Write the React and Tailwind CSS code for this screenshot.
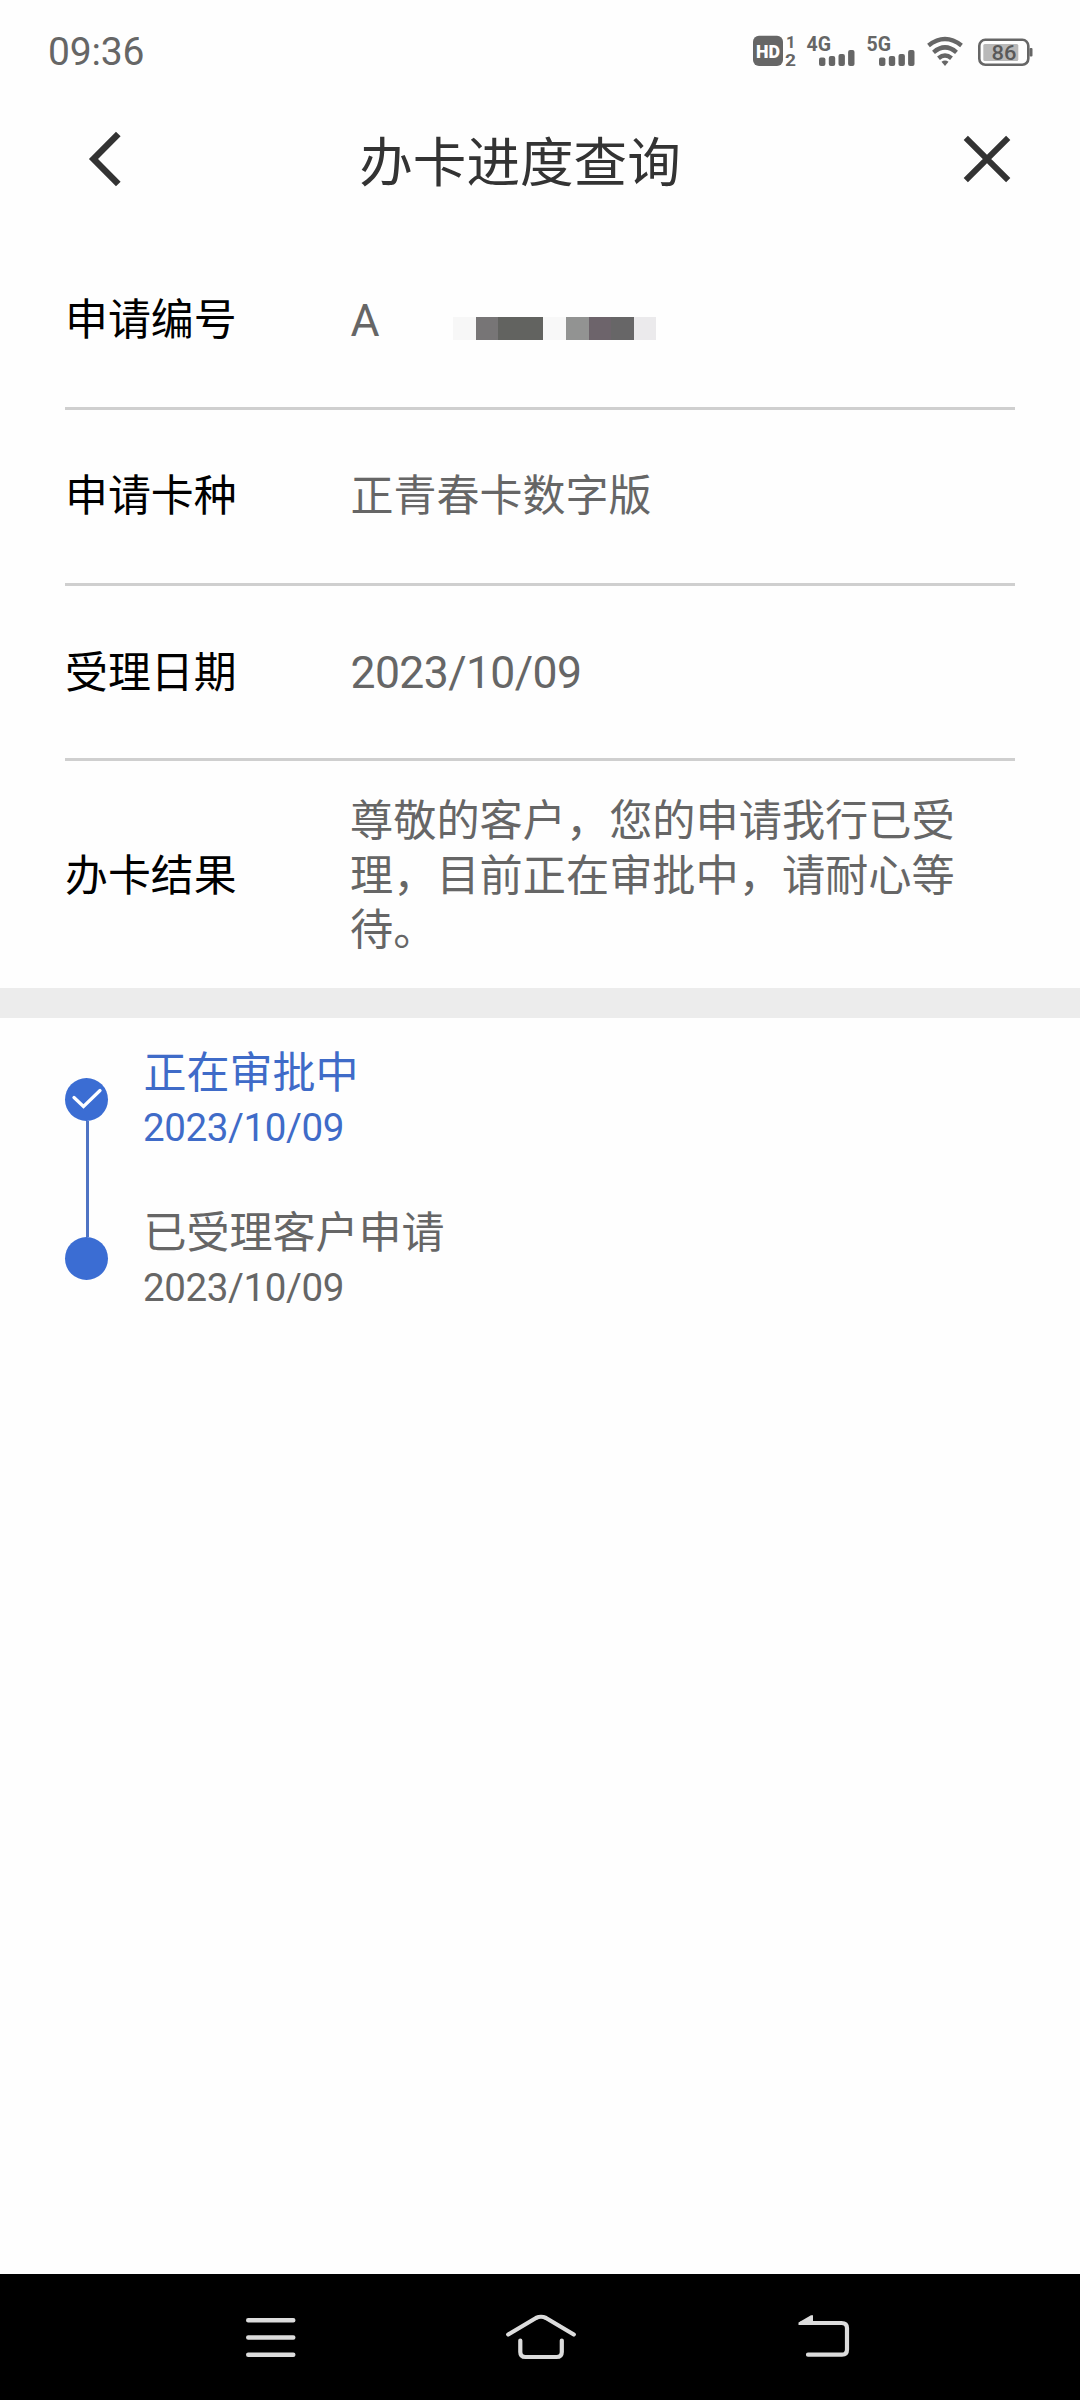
import React from 'react';

const details = [
  { label: '申请编号', value: 'A', type: 'masked' },
  { label: '申请卡种', value: '正青春卡数字版', type: 'text' },
  { label: '受理日期', value: '2023/10/09', type: 'date' },
];

const steps = [
  { title: '正在审批中', date: '2023/10/09', active: true },
  { title: '已受理客户申请', date: '2023/10/09', active: false },
];

const maskColors = [
  '#f7f7f7', '#777576', '#626360', '#626360', '#f8f8f8',
  '#929392', '#6d646b', '#676667', '#ebeaec',
];

function Signal({ label }) {
  return (
    <svg className="overflow-visible" width="42" height="32" viewBox="0 0 42 32" fill="#666666">
      <text x="-0.5" y="15.5" fontSize="20.5" fontWeight="700" fontFamily="Roboto, sans-serif" textLength="24.5" lengthAdjust="spacingAndGlyphs">
        {label}
      </text>
      <rect x="12" y="22.5" width="6.4" height="8.5" rx="2" />
      <rect x="21.8" y="21" width="6.4" height="10" rx="2" />
      <rect x="31.5" y="19" width="6.4" height="12" rx="2" />
      <rect x="41.1" y="15" width="6.4" height="16" rx="2" />
    </svg>
  );
}

function StatusBar() {
  return (
    <div className="flex h-[102px] items-center justify-between pl-[48px] pr-[47px]">
      <span className="pt-[2px] font-[Roboto] text-[39px] leading-none tracking-[-0.2px] text-[#666666]">09:36</span>
      <div className="flex items-center">
        {/* HD voice */}
        <svg className="mr-[11px] overflow-visible" width="43" height="32" viewBox="0 0 43 32" fill="#666666">
          <rect x="0" y="0.7" width="30" height="30.3" rx="6" />
          <text x="3" y="22.5" fontSize="19" fontWeight="900" fill="#ffffff" fontFamily="Roboto, sans-serif" textLength="24" lengthAdjust="spacingAndGlyphs">HD</text>
          <text x="33" y="12.5" fontSize="16.5" fontWeight="700" fontFamily="Roboto, sans-serif">1</text>
          <text x="32" y="30.5" fontSize="17" fontWeight="700" fontFamily="Roboto, sans-serif" textLength="11" lengthAdjust="spacingAndGlyphs">2</text>
        </svg>
        <div className="mr-[18px]"><Signal label="4G" /></div>
        <div className="mr-[18px]"><Signal label="5G" /></div>
        {/* Wifi */}
        <svg className="mr-[15px]" width="36" height="32" viewBox="0 0 36 32" fill="none" stroke="#666666" strokeWidth="4.4">
          <path d="M1.5 10.5 Q18 -2.5 34.5 10.5" />
          <path d="M6.5 17.3 Q18 7.5 29.5 17.3" />
          <path d="M11.5 23.3 Q18 17.8 24.5 23.3" />
          <path d="M14.5 26.8 Q18 24 21.5 26.8 L18 31 Z" fill="#666666" stroke="none" />
        </svg>
        {/* Battery */}
        <svg width="55" height="32" viewBox="0 0 55 32" fill="#666666">
          <rect x="1.3" y="4.8" width="49" height="25" rx="6" fill="none" stroke="#666666" strokeWidth="2.6" />
          <rect x="5.3" y="9" width="35" height="17" rx="1.5" fill="#b9b9b9" />
          <rect x="51.5" y="13" width="3" height="8.5" rx="1" />
          <text x="13.5" y="25" fontSize="21" fontWeight="500" fill="#595959" fontFamily="Roboto, sans-serif" textLength="25" lengthAdjust="spacingAndGlyphs">86</text>
        </svg>
      </div>
    </div>
  );
}

function Header() {
  return (
    <div className="flex h-[133px] items-start justify-between pl-[88px] pr-[69px] pt-[24px]">
      <svg className="mt-[5px]" width="34" height="56" viewBox="0 0 34 56" fill="none" stroke="#333333" strokeWidth="6.5">
        <path d="M30.3 3 L5.5 28 L30.3 53" />
      </svg>
      <h1 className="-mt-[2px] mr-[45px] text-[53.6px] leading-[70px] text-[#333333]">办卡进度查询</h1>
      <svg className="mt-[9px]" width="48" height="48" viewBox="0 0 48 48" fill="none" stroke="#333333" strokeWidth="6">
        <path d="M2.8 2.8 L45.2 45.2 M45.2 2.8 L2.8 45.2" />
      </svg>
    </div>
  );
}

function MaskedNumber() {
  return (
    <div className="mt-[15px] ml-[73.5px] flex">
      {maskColors.map((color, i) => (
        <div key={i} className="h-[23px] w-[22.6px]" style={{ backgroundColor: color }} />
      ))}
    </div>
  );
}

function DetailRow({ label, value, type }) {
  return (
    <div className="flex h-[175.3px] items-center border-b-[3px] border-[#cfcfcf] text-[42.9px]">
      <div className={`w-[285.5px] text-black ${type === 'date' ? 'pb-[6px]' : 'pb-[9px]'}`}>{label}</div>
      {type === 'text' ? (
        <div className="pb-[9px] text-[43px] text-[#666666]">{value}</div>
      ) : (
        <div className="flex items-center font-[Roboto] text-[44.5px] leading-none text-[#666666]">
          <span className={type === 'date' ? 'pt-[4px] tracking-[-0.6px]' : ''}>{value}</span>
          {type === 'masked' && <MaskedNumber />}
        </div>
      )}
    </div>
  );
}

function Timeline() {
  return (
    <div className="flex pl-[65px] pt-[60px]">
      <div className="flex w-[43px] flex-col items-center">
        <div className="flex size-[43px] items-center justify-center rounded-full bg-[#3b6dd3]">
          <svg width="30" height="22" viewBox="0 0 30 22" fill="none" stroke="#ffffff" strokeWidth="3.2" strokeLinecap="round">
            <path d="M2 9.5 L11.5 18.5 L28 2.5" />
          </svg>
        </div>
        <div className="ml-[2px] h-[116px] w-[3px] bg-[#4f74c4]" />
        <div className="size-[43px] rounded-full bg-[#3b6dd3]" />
      </div>
      <div className="-mt-[37px] ml-[35.5px]">
        {steps.map((step) => (
          <div key={step.title} className={`h-[160px] ${step.active ? 'text-[#3f6bc8]' : 'text-[#666666]'}`}>
            <div className="text-[43px] leading-[56px]">{step.title}</div>
            <div className="-ml-[0.5px] pt-[3px] font-[Roboto] text-[38.5px] leading-[56px] tracking-[-0.4px]">{step.date}</div>
          </div>
        ))}
      </div>
    </div>
  );
}

function NavBar() {
  return (
    <div className="flex h-[126px] items-start justify-between bg-black pl-[246px] pr-[229px] pt-[39px]">
      <svg width="50" height="46" viewBox="0 0 50 46" fill="none" stroke="#dcdcdc" strokeWidth="4.4" strokeLinecap="round">
        <path d="M2.2 7.3 H47.3 M2.2 24.5 H47.3 M2.2 41.7 H47.3" />
      </svg>
      <svg className="mr-[13px]" width="70" height="48" viewBox="0 0 70 48" fill="none" stroke="#dcdcdc" strokeWidth="4.2" strokeLinecap="round" strokeLinejoin="round">
        <path d="M2.2 21.5 L30 5 Q35 2.5 40 5 L67.8 21.5" />
        <path d="M14.3 27.5 V39 Q14.3 44 19.5 44 H50.5 Q55.8 44 55.8 39 V27.5" />
      </svg>
      <svg width="53" height="46" viewBox="0 0 53 46" fill="none" stroke="#dcdcdc" strokeWidth="4.2" strokeLinecap="round">
        <path d="M4 10 H43.5 Q49 10 49 15 V36.5 Q49 41.7 44 41.7 H10" />
        <path d="M0.5 11.5 V9.5 L13 2.3 H15 V12 H0.5 Z" fill="#dcdcdc" stroke="none" />
      </svg>
    </div>
  );
}

export default function App() {
  return (
    <div className="flex h-[2400px] w-[1080px] flex-col bg-[#fefefe] font-['Noto_Sans_CJK_SC',sans-serif]">
      <StatusBar />
      <Header />

      {/* Application details */}
      <div className="px-[65px]">
        {details.map((item) => (
          <DetailRow key={item.label} {...item} />
        ))}
        <div className="flex h-[227px] items-center pb-[5px] text-[43.2px]">
          <div className="w-[285px] shrink-0 text-[42.9px] text-black">办卡结果</div>
          <div className="w-[615px] leading-[54.3px] text-[#666666]">
            尊敬的客户，您的申请我行已受理，目前正在审批中，请耐心等待。
          </div>
        </div>
      </div>
      <div className="h-[30px] w-full bg-[#ececec]" />

      <div className="flex-1">
        <Timeline />
      </div>
      <NavBar />
    </div>
  );
}
